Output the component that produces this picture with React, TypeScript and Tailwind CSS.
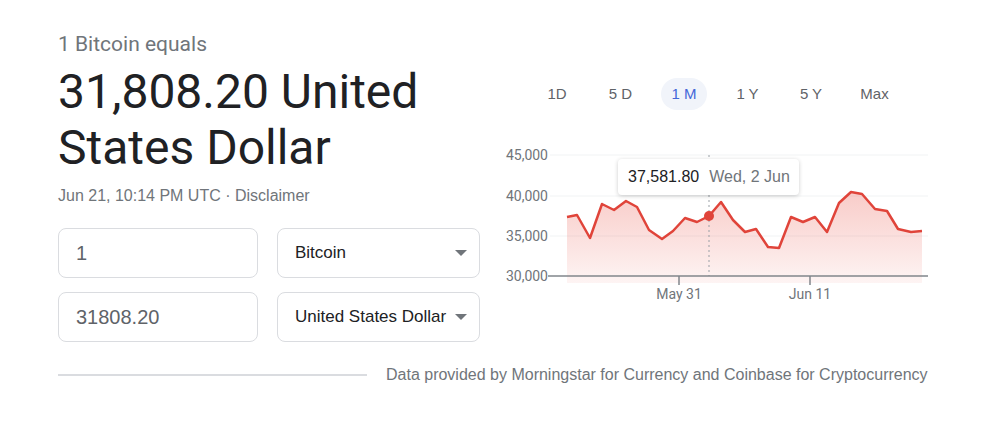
import React from "react";

const pts: [number, number][] = [
  [567, 217], [577, 215], [590, 238], [602, 204], [614, 210], [626, 201],
  [637, 207], [649, 230], [662, 239], [673, 231], [685, 218], [697, 222],
  [709, 216], [721, 202], [733, 220], [745, 232], [756, 229], [768, 247],
  [779, 248], [791, 217], [803, 222], [815, 217], [827, 232], [839, 203],
  [851, 192], [862, 194], [875, 209], [887, 211], [898, 229], [911, 232],
  [922, 231],
];

// chart svg origin at page (490, 145)
const OX = 490;
const OY = 145;

const Chart = () => {
  const line = pts.map(([x, y], i) => `${i ? "L" : "M"}${x - OX} ${y - OY}`).join(" ");
  const area = `${line} L${922 - OX} ${283 - OY} L${567 - OX} ${283 - OY} Z`;
  const grid = [
    { y: 155, label: "45,000" },
    { y: 196, label: "40,000" },
    { y: 236, label: "35,000" },
  ];
  return (
    <svg width="440" height="165" className="block">
      <defs>
        <linearGradient id="fill" x1="0" y1="0" x2="0" y2="1">
          <stop offset="0%" stopColor="#e8483c" stopOpacity="0.28" />
          <stop offset="100%" stopColor="#e8483c" stopOpacity="0.06" />
        </linearGradient>
      </defs>
      {grid.map((g) => (
        <g key={g.label}>
          <line x1={550 - OX} x2={928 - OX} y1={g.y - OY} y2={g.y - OY} stroke="#f1f3f4" strokeWidth="1" />
          <text x={548 - OX} y={g.y - OY + 5} textAnchor="end" fontSize="14" fill="#70757a" fontFamily="Roboto, Arial, sans-serif">
            {g.label}
          </text>
        </g>
      ))}
      <path d={area} fill="url(#fill)" />
      <line x1={709 - OX} x2={709 - OX} y1={155 - OY} y2={276 - OY} stroke="#9aa0a6" strokeWidth="1" strokeDasharray="2 3" />
      <path d={line} fill="none" stroke="#e0443a" strokeWidth="2.5" strokeLinejoin="round" />
      <circle cx={709 - OX} cy={216 - OY} r="5" fill="#e0443a" />
      <line x1={548 - OX} x2={928 - OX} y1={276 - OY} y2={276 - OY} stroke="#80868b" strokeWidth="1.5" />
      <text x={548 - OX} y={276 - OY + 5} textAnchor="end" fontSize="14" fill="#70757a" fontFamily="Roboto, Arial, sans-serif">
        30,000
      </text>
      <line x1={679 - OX} x2={679 - OX} y1={276 - OY} y2={285 - OY} stroke="#80868b" strokeWidth="1.5" />
      <line x1={810 - OX} x2={810 - OX} y1={276 - OY} y2={285 - OY} stroke="#80868b" strokeWidth="1.5" />
      <text x={679 - OX} y={299 - OY} textAnchor="middle" fontSize="14" fill="#70757a" fontFamily="Roboto, Arial, sans-serif">
        May 31
      </text>
      <text x={810 - OX} y={299 - OY} textAnchor="middle" fontSize="14" fill="#70757a" fontFamily="Roboto, Arial, sans-serif">
        Jun 11
      </text>
    </svg>
  );
};

const Caret = () => (
  <svg width="12" height="6" viewBox="0 0 12 6" className="shrink-0">
    <path d="M0 0 L12 0 L6 6 Z" fill="#70757a" />
  </svg>
);

const App = () => {
  const ranges = ["1D", "5 D", "1 M", "1 Y", "5 Y", "Max"];
  return (
    <div className="w-[1000px] h-[431px] bg-white font-['Roboto',Arial,sans-serif]">
      <div className="flex pl-[58px] pt-[31px]">
        {/* left: conversion */}
        <div className="w-[423px] flex flex-col">
          <p className="text-[21px] leading-[26px] text-[#70757a]">1 Bitcoin equals</p>
          <h1 className="mt-[7px] text-[48px] leading-[56px] text-[#202124]">
            31,808.20 United States Dollar
          </h1>
          <p className="mt-[10px] text-[16px] leading-[20px] text-[#70757a] font-['Liberation_Sans',Arial,sans-serif]">
            Jun 21, 10:14 PM UTC · Disclaimer
          </p>
          <div className="mt-[22px] grid grid-cols-[200px_203px] gap-x-[19px] gap-y-[14px] font-['Liberation_Sans',Arial,sans-serif]">
            <div className="h-[50px] border border-[#dadce0] rounded-[8px] flex items-center px-[17px] text-[20px] text-[#5f6368]">
              1
            </div>
            <div className="h-[50px] border border-[#dadce0] rounded-[8px] flex items-center justify-between pl-[17px] pr-[12px] text-[17px] text-[#202124]">
              <span>Bitcoin</span>
              <Caret />
            </div>
            <div className="h-[50px] border border-[#dadce0] rounded-[8px] flex items-center px-[17px] text-[20px] text-[#5f6368]">
              31808.20
            </div>
            <div className="h-[50px] border border-[#dadce0] rounded-[8px] flex items-center justify-between pl-[17px] pr-[12px] text-[17px] text-[#202124]">
              <span>United States Dollar</span>
              <Caret />
            </div>
          </div>
        </div>

        {/* right: chart */}
        <div className="ml-[9px] w-[440px] flex flex-col">
          <div className="mt-[47px] flex items-center gap-[17.5px] pl-[44px] text-[15px] text-[#5f6368] font-['Liberation_Sans',Arial,sans-serif]">
            {ranges.map((r) => (
              <span
                key={r}
                className={
                  r === "1 M"
                    ? "w-[46px] h-[32px] rounded-full bg-[#f1f4fa] text-[#4467d8] flex items-center justify-center"
                    : "w-[46px] h-[32px] flex items-center justify-center"
                }
              >
                {r}
              </span>
            ))}
          </div>
          <div className="relative mt-[35px]">
            <Chart />
            <div className="absolute left-[128px] top-[14px] w-[181px] h-[36px] bg-white rounded-[4px] shadow-[0_1px_4px_rgba(0,0,0,0.2)] flex items-center pl-[10px] text-[16px] font-['Liberation_Sans',Arial,sans-serif]">
              <span className="text-[#202124]">37,581.80</span>
              <span className="ml-[10px] text-[#70757a]">Wed, 2 Jun</span>
            </div>
          </div>
        </div>
      </div>

      <div className="flex items-center pl-[58px] mt-[21px]">
        <div className="w-[309px] h-[2px] bg-[#dadce0]" />
        <p className="ml-[19px] text-[16px] leading-[24px] text-[#70757a] font-['Liberation_Sans',Arial,sans-serif]">
          Data provided by Morningstar for Currency and Coinbase for Cryptocurrency
        </p>
      </div>
    </div>
  );
};

export default App;
